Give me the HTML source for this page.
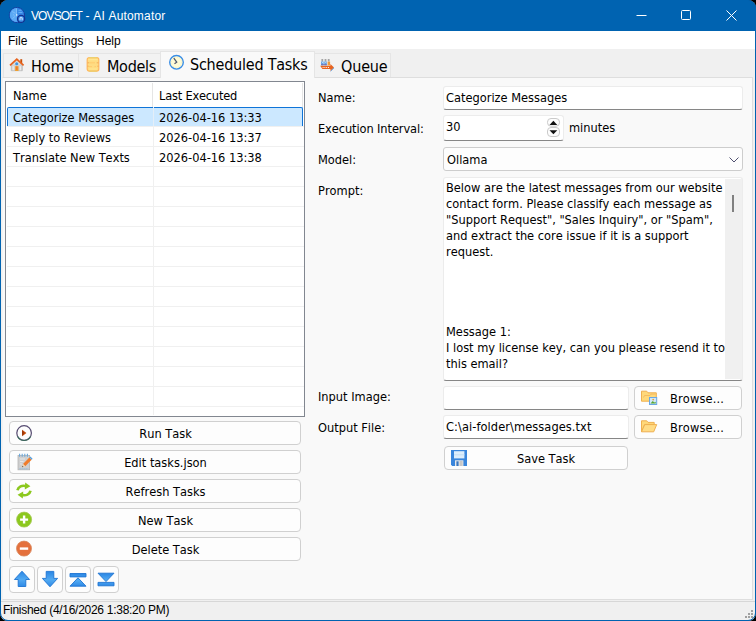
<!DOCTYPE html>
<html><head><meta charset="utf-8"><title>VOVSOFT - AI Automator</title>
<style>
*{box-sizing:border-box;margin:0;padding:0}
html,body{width:756px;height:621px;overflow:hidden;background:#fff}
body{font-family:"DejaVu Sans Condensed","DejaVu Sans","Liberation Sans",sans-serif;font-size:12.7px;color:#000;position:relative;font-kerning:none;-webkit-font-smoothing:auto}
.a{position:absolute}
svg.a{z-index:5}
#win{left:0;top:0;width:756px;height:621px;background:#f0f0f0;border:1px solid #0063b1;border-radius:8px;overflow:hidden}
#title{left:0;top:0;width:756px;height:31px;background:#0063b1}
.seg{font-family:"Liberation Sans",sans-serif;font-size:12px}
#ttext{left:31px;top:9px;color:#fff;white-space:nowrap;font-size:12px;letter-spacing:-0.1px}
#menu{left:1px;top:31px;width:754px;height:18px;background:#fff}
.mi{top:34px;white-space:nowrap}
.tab{top:53px;height:24px;background:#f2f2f2;border:1px solid #e5e5e5;border-bottom:none;font-size:16px;white-space:nowrap}
.tab span{position:absolute;top:3px}
.tab.act{top:51px;height:27px;background:#f9f9f9;z-index:2}
#page{left:2px;top:77px;width:751px;height:523px;background:#f9f9f9;border:1px solid #dedede;border-left-color:#f3f3f3}
#list{left:5px;top:81px;width:300px;height:336px;background:#fff;border:1px solid #828790}
.lt{white-space:nowrap}
.hl{background:#ededed;height:1px}
.vl{background:#ededed;width:1px}
.btn{background:#fdfdfd;border:1px solid #d0d0d0;border-radius:4px;text-align:center;white-space:nowrap}
.btn .t{position:absolute;left:21px;right:0;top:4px;text-align:center}
.edit{background:#fff;border:1px solid #ececec;border-bottom:1px solid #868686;border-radius:3px;white-space:nowrap}
.edit .t{position:absolute;left:2px;top:3px}
.lbl{white-space:nowrap}
#status{left:1px;top:601px;width:754px;height:19px;background:#f0f0f0;border-top:1px solid #d7d7d7}
</style></head><body>
<div id="win" class="a"></div>
<div id="title" class="a" style="border-radius:8px 8px 0 0"></div>
<div id="ttext" class="a seg"><span style="letter-spacing:-0.9px">VOVSOFT</span><span style="letter-spacing:0.18px"> - AI Automator</span></div>
<!-- window controls -->
<svg class="a" style="left:620px;top:0" width="136" height="31" viewBox="0 0 136 31">
<path d="M16.5 15.5h10" stroke="#fff" stroke-width="1" fill="none"/>
<rect x="61.5" y="10.5" width="9" height="9" rx="1" stroke="#fff" stroke-width="1" fill="none"/>
<path d="M106.5 10.5l10 10M116.5 10.5l-10 10" stroke="#fff" stroke-width="1" fill="none"/>
</svg>
<div id="menu" class="a"></div>
<div class="a seg mi" style="left:8px">File</div>
<div class="a seg mi" style="left:40px">Settings</div>
<div class="a seg mi" style="left:96px">Help</div>

<div id="page" class="a"></div>
<div class="a tab" style="left:3px;width:76px"><span style="left:27px">Home</span></div>
<div class="a tab" style="left:78px;width:83px"><span style="left:28px;letter-spacing:-0.3px">Models</span></div>
<div class="a tab act" style="left:160px;width:155px"><span style="left:29px;top:3px;letter-spacing:-0.22px">Scheduled Tasks</span></div>
<div class="a tab" style="left:314px;width:77px"><span style="left:26px;letter-spacing:-0.15px">Queue</span></div>

<div id="list" class="a"></div>
<div class="a lt" style="left:13px;top:88px">Name</div>
<div class="a lt" style="left:159px;top:88px;letter-spacing:-0.2px">Last Executed</div>
<div class="a vl" style="left:152px;top:83px;height:24px;background:#e5e5e5"></div>
<div class="a vl" style="left:302px;top:83px;height:24px;background:#e5e5e5"></div>
<div class="a vl" style="left:153px;top:107px;height:308px;background:#f0f0f0"></div>
<div class="a hl" style="left:7px;top:126px;width:297px;background:#f0f0f0"></div>
<div class="a hl" style="left:7px;top:146px;width:297px;background:#f0f0f0"></div>
<div class="a hl" style="left:7px;top:166px;width:297px;background:#f0f0f0"></div>
<div class="a hl" style="left:7px;top:186px;width:297px;background:#f0f0f0"></div>
<div class="a hl" style="left:7px;top:206px;width:297px;background:#f0f0f0"></div>
<div class="a hl" style="left:7px;top:226px;width:297px;background:#f0f0f0"></div>
<div class="a hl" style="left:7px;top:246px;width:297px;background:#f0f0f0"></div>
<div class="a hl" style="left:7px;top:266px;width:297px;background:#f0f0f0"></div>
<div class="a hl" style="left:7px;top:286px;width:297px;background:#f0f0f0"></div>
<div class="a hl" style="left:7px;top:306px;width:297px;background:#f0f0f0"></div>
<div class="a hl" style="left:7px;top:326px;width:297px;background:#f0f0f0"></div>
<div class="a hl" style="left:7px;top:346px;width:297px;background:#f0f0f0"></div>
<div class="a hl" style="left:7px;top:366px;width:297px;background:#f0f0f0"></div>
<div class="a hl" style="left:7px;top:386px;width:297px;background:#f0f0f0"></div>
<div class="a hl" style="left:7px;top:406px;width:297px;background:#f0f0f0"></div>
<div class="a" style="left:7px;top:107px;width:296px;height:19px;background:#cce8ff;border:1px solid #0f74d8;border-bottom:none;border-radius:2px 2px 0 0"></div>
<div class="a vl" style="left:153px;top:107px;height:19px;background:#e4eef8"></div>
<div class="a lt" style="left:13px;top:110px">Categorize Messages</div>
<div class="a lt" style="left:159px;top:110px">2026-04-16 13:33</div>
<div class="a lt" style="left:13px;top:130px">Reply to Reviews</div>
<div class="a lt" style="left:159px;top:130px">2026-04-16 13:37</div>
<div class="a lt" style="left:13px;top:150px">Translate New Texts</div>
<div class="a lt" style="left:159px;top:150px">2026-04-16 13:38</div>

<div class="a btn" style="left:9px;top:421px;width:292px;height:24px"><span class="t">Run Task</span></div>
<div class="a btn" style="left:9px;top:450px;width:292px;height:24px"><span class="t">Edit tasks.json</span></div>
<div class="a btn" style="left:9px;top:479px;width:292px;height:24px"><span class="t">Refresh Tasks</span></div>
<div class="a btn" style="left:9px;top:508px;width:292px;height:24px"><span class="t">New Task</span></div>
<div class="a btn" style="left:9px;top:537px;width:292px;height:24px"><span class="t">Delete Task</span></div>
<div class="a btn" style="left:9px;top:566px;width:26px;height:27px"></div>
<div class="a btn" style="left:37px;top:566px;width:26px;height:27px"></div>
<div class="a btn" style="left:65px;top:566px;width:26px;height:27px"></div>
<div class="a btn" style="left:93px;top:566px;width:26px;height:27px"></div>

<div class="a lbl" style="left:318px;top:90px">Name:</div>
<div class="a lbl" style="left:318px;top:121px;letter-spacing:-0.09px">Execution Interval:</div>
<div class="a lbl" style="left:318px;top:152px">Model:</div>
<div class="a lbl" style="left:318px;top:183px">Prompt:</div>
<div class="a lbl" style="left:318px;top:389px">Input Image:</div>
<div class="a lbl" style="left:318px;top:420px">Output File:</div>

<div class="a edit" style="left:443px;top:86px;width:300px;height:24px"><span class="t">Categorize Messages</span></div>
<div class="a edit" style="left:443px;top:115px;width:121px;height:26px"><span class="t" style="top:3px">30</span></div>
<div class="a lbl" style="left:569px;top:120px">minutes</div>
<div class="a edit" style="left:443px;top:147px;width:300px;height:24px;border:1px solid #cdcdcd;background:#fdfdfd"><span class="t" style="left:3px;top:4px">Ollama</span></div>
<div class="a edit" style="left:443px;top:177px;width:300px;height:204px;white-space:normal"></div>
<div class="a" style="left:725px;top:179px;width:17px;height:200px;background:#f0f0f0"></div>
<div class="a" style="left:732px;top:195px;width:2px;height:17px;background:#808080"></div>
<div class="a" style="left:446px;top:180px;width:285px;line-height:16px;white-space:pre">Below are the latest messages from our website
contact form. Please classify each message as
"Support Request", "Sales Inquiry", or "Spam",
and extract the core issue if it is a support
request.




Message 1:
I lost my license key, can you please resend it to
this email?</div>
<div class="a edit" style="left:443px;top:386px;width:186px;height:24px"></div>
<div class="a edit" style="left:443px;top:415px;width:186px;height:24px"><span class="t" style="letter-spacing:0.08px">C:\ai-folder\messages.txt</span></div>
<div class="a btn" style="left:634px;top:386px;width:108px;height:24px"><span class="t" style="left:18px;top:4px;letter-spacing:0.12px">Browse...</span></div>
<div class="a btn" style="left:634px;top:415px;width:108px;height:24px"><span class="t" style="left:18px;top:4px;letter-spacing:0.12px">Browse...</span></div>
<div class="a btn" style="left:444px;top:446px;width:184px;height:24px"><span class="t" style="left:20px;top:4px">Save Task</span></div>


<!-- app icon -->
<svg class="a" style="left:8px;top:6px" width="18" height="18" viewBox="0 0 18 18">
<circle cx="8.900" cy="9" r="7.500" fill="#3688e6" stroke="#17349a" stroke-width="1" stroke-dasharray="2.200 .600"/>
<path d="M8.900 1.900A7.100 7.100 0 0 0 8.900 16.100z" fill="#5ba9f5"/>
<path d="M8.500 2.500v8M4 5.500l3.500 1.800M4.300 12.600l3-2.400M5 8.500l1.500 1" stroke="#7cbcfa" stroke-width="1" fill="none"/>
<path d="M10.500 4.300h3M10.500 6.500h3.800" stroke="#62aef6" stroke-width="1" fill="none"/>
<rect x="8" y="8.200" width="1.400" height="1.400" fill="#d8ecff"/>
<circle cx="13.100" cy="12.900" r="3.500" fill="#3f93ea" stroke="#13308e" stroke-width="1.400"/>
<path d="M12 14.200v-2.500h2.200v2.500" stroke="#cfe6ff" stroke-width="1" fill="none"/>
</svg>
<!-- home icon -->
<svg class="a" style="left:8px;top:56px" width="18" height="17" viewBox="0 0 18 17">
<rect x="12.300" y="3.200" width="1.900" height="4.300" fill="#c8500a"/>
<path d="M3.300 8.800L8.800 4l5.500 4.800v5.900H3.300z" fill="#d2d2d2" stroke="#b8b8b8" stroke-width=".8"/>
<path d="M5.200 10.200v4M12.300 10.200v4" stroke="#ececec" stroke-width="1.300"/>
<path d="M5.500 8.500L8.800 5.600l3.300 2.900" stroke="#e6e6e6" stroke-width="1" fill="none"/>
<rect x="7.100" y="10.200" width="3.400" height="4.800" fill="#f0a030"/>
<rect x="8" y="10.500" width="1.600" height="3.400" fill="#f07828"/>
<circle cx="8.700" cy="7.800" r="1.500" fill="#3c96e6"/>
<path d="M2 9.300L8.800 3.100l6.800 6.200" stroke="#e8641e" stroke-width="1.700" fill="none" stroke-linejoin="miter"/>
</svg>
<!-- models icon -->
<svg class="a" style="left:86px;top:56px" width="14" height="17" viewBox="0 0 14 17">
<rect x="1.200" y="1.700" width="11.600" height="13.400" rx="2" fill="#ffdc82" stroke="#ffb85c" stroke-width="1.200"/>
<path d="M3.200 1.600h7.600M3.200 15.200h7.600" stroke="#ecd070" stroke-width="1.200"/>
<path d="M2.200 3.600h9.600" stroke="#ffe690" stroke-width="1.400"/>
<path d="M1.500 6.800h1.800M10.700 6.800h1.800M1.500 10.200h1.200M11.300 10.200h1.200" stroke="#f0a050" stroke-width="1" opacity=".8"/>
<path d="M3 10.600h3M8.500 10.600h1.500M4 6.800h5" stroke="#ffc466" stroke-width="1" opacity=".7"/>
<path d="M3 13h8" stroke="#ffe690" stroke-width="1.200"/>
</svg>
<!-- clock icon -->
<svg class="a" style="left:168px;top:54px" width="17" height="17" viewBox="0 0 17 17">
<circle cx="8.5" cy="8.3" r="6.8" fill="#fffbd6" stroke="#3a8ee6" stroke-width="1.4"/>
<circle cx="8.5" cy="8.3" r="5.2" fill="none" stroke="#f4ecc0" stroke-width="1" stroke-dasharray="1 1.7"/>
<path d="M5.8 4.2l2.9 4-2.2 1.6" stroke="#50586e" stroke-width="1.3" fill="none"/>
</svg>
<!-- queue icon -->
<svg class="a" style="left:319px;top:57px" width="17" height="16" viewBox="0 0 17 16">
<path d="M2.400 2h1.800v2.600H2.400zM5.600 2h1.800v2.600H5.600zM8.800 2h1.800v2.600H8.800z" fill="#a4a4a4"/>
<path d="M2.100 4.600h2.500v3.800H2.100zM5.300 4.600h2.500v3.800H5.300z" fill="#5a9ee4"/>
<path d="M8.600 4.600h2.500v3.800H8.600z" fill="#ee9a3a"/>
<path d="M3 5.600h1M6.200 5.600h1" stroke="#c4e0fa" stroke-width="1"/>
<path d="M2.100 7.600h5.700" stroke="#7a6aa8" stroke-width=".8"/>
<path d="M1.200 8.800h10.200V7l3.600 3.500-3.600 3.500v-2H3.400z" fill="#e8641e"/>
<path d="M3.600 10.500h7" stroke="#fff" stroke-width=".9" stroke-dasharray="1 .8"/>
<path d="M11.600 14.200l3.400-3.400" stroke="#3c8ce0" stroke-width=".8"/>
</svg>
<!-- run icon -->
<svg class="a" style="left:15px;top:424px" width="18" height="18" viewBox="0 0 18 18">
<circle cx="9.100" cy="9" r="7.300" fill="#fdfdfd" stroke="#554a70" stroke-width="1.200"/>
<path d="M2.6 12.500a7.300 7.300 0 0 0 13 0" stroke="#3c6a5c" stroke-width="1.200" fill="none"/>
<path d="M7.200 5.800l4.200 3.200-4.200 3.200z" fill="#c04a08"/>
<path d="M7.200 5.800l1.500 3.200-1.500 3.200z" fill="#8c2c00"/>
</svg>
<!-- edit icon -->
<svg class="a" style="left:17px;top:453px" width="16" height="18" viewBox="0 0 16 18">
<rect x="1" y="2.500" width="11.600" height="14.300" fill="#cfcfcf" stroke="#b4b4b4" stroke-width=".8"/>
<path d="M2.600 .8v3M5.200 .8v3M7.800 .8v3M10.400 .8v3" stroke="#6aa8dc" stroke-width="1.100"/>
<path d="M2.600 15.800h8.600" stroke="#78b4e0" stroke-width="1" stroke-dasharray="1 1"/>
<path d="M3 6h5M3 8.500h3.500M3 11h2" stroke="#e6e6e6" stroke-width="1"/>
<path d="M12.400 4.600l2.200 2.200-6.400 6.400-2.200-2.200z" fill="#f07c2a"/>
<path d="M12.400 4.600l1-1 2.200 2.200-1 1z" fill="#58a0dc"/>
<path d="M6 11l2.200 2.200-3.200 1z" fill="#f4d8b0"/>
<path d="M5 14.200l.5-1.500 1 1z" fill="#444"/>
</svg>
<!-- refresh icon -->
<svg class="a" style="left:15px;top:482px" width="18" height="17" viewBox="0 0 18 17">
<g id="ra"><path d="M2.500 8.200C3.200 4.800 7 2.800 11.400 4.200" stroke="#8cc81e" stroke-width="2.700" fill="none"/>
<path d="M10.200 .600l5.200 3.700-5.600 3.300z" fill="#8cc81e"/></g>
<use href="#ra" transform="rotate(180 9 8.500)"/>
</svg>
<!-- new icon -->
<svg class="a" style="left:15px;top:511px" width="18" height="18" viewBox="0 0 18 18">
<circle cx="9.100" cy="8.600" r="7.500" fill="#8cc81e" stroke="#a4c850" stroke-width=".8"/>
<path d="M9.100 4.600v8M5.100 8.600h8" stroke="#fff" stroke-width="2.400"/>
</svg>
<!-- delete icon -->
<svg class="a" style="left:15px;top:540px" width="18" height="18" viewBox="0 0 18 18">
<circle cx="9" cy="8.600" r="7.500" fill="#e4703c" stroke="#d8865a" stroke-width=".8"/>
<path d="M4.800 8.600h8.400" stroke="#fff" stroke-width="2.400"/>
</svg>
<!-- arrows -->
<svg class="a" style="left:9px;top:566px" width="110" height="26" viewBox="0 0 110 26">
<defs><linearGradient id="bg" x1="0" y1="0" x2="0" y2="1"><stop offset="0" stop-color="#2a86e4"/><stop offset=".55" stop-color="#52aaf2"/><stop offset="1" stop-color="#2f8ae6"/></linearGradient></defs>
<path d="M13 5.200l7.600 8.300h-3.800v7h-7.600v-7H5.400z" fill="url(#bg)" stroke="#1e74d2" stroke-width=".9"/>
<path d="M37.200 5.400h7.600v7h3.800L41 20.800l-7.600-8.400h3.800z" fill="url(#bg)" stroke="#1e74d2" stroke-width=".9"/>
<path d="M61 7.500h16v3.400H61zM69 11.800l8 8.400H61z" fill="url(#bg)" stroke="#1e74d2" stroke-width=".9"/>
<path d="M89 7.200h16l-8 8.400zM89 16.400h16v3.400H89z" fill="url(#bg)" stroke="#1e74d2" stroke-width=".9"/>
</svg>
<!-- browse 1 -->
<svg class="a" style="left:640px;top:389px" width="18" height="17" viewBox="0 0 18 17">
<path d="M1.500 2.200h5.200l1.300 1.600h8.300v8.400H1.500z" fill="#ffd97a" stroke="#efb050" stroke-width="1"/>
<path d="M3.500 8.500l1-2h5.500l1-1.400h4.500" stroke="#f4b860" stroke-width=".9" fill="none"/>
<rect x="9.500" y="8.500" width="7.200" height="7" fill="#cfe8fa" stroke="#6aa8e4" stroke-width="1"/>
<path d="M10.400 14.600l2.400-2.600 1.400 1.400 1.500-.600v1.800z" fill="#5aa832"/>
<circle cx="13.200" cy="10.600" r=".9" fill="#f0a030"/>
</svg>
<!-- browse 2 -->
<svg class="a" style="left:640px;top:419px" width="18" height="15" viewBox="0 0 18 15">
<path d="M1.500 1.800h5.200l1.300 1.600h6.200v2H4.700L1.500 12.800z" fill="#ffd97a" stroke="#efb050" stroke-width="1"/>
<path d="M1.500 12.800l3.200-7.200h12l-3 7.200z" fill="#ffdc86" stroke="#efb050" stroke-width="1"/>
</svg>
<!-- save icon -->
<svg class="a" style="left:451px;top:450px" width="16" height="16" viewBox="0 0 16 16">
<path d="M0 0h16v16H1.200L0 14.800z" fill="#3a86dc"/>
<rect x="3" y="1.200" width="10.400" height="7.200" fill="#ddeefc"/>
<path d="M3 4.800h10.400" stroke="#c4def6" stroke-width="1"/>
<rect x="4" y="10.300" width="8.400" height="5.700" fill="#e8e8e8"/>
<rect x="5.400" y="11.300" width="2.200" height="4.700" fill="#3a78c0"/>
<rect x="8.600" y="11" width="3" height="5" fill="#c8c8c8"/>
</svg>
<svg class="a" style="left:546px;top:117px" width="16" height="22" viewBox="0 0 16 22">
<rect x="1.500" y="1.500" width="12" height="7.700" rx="3.500" fill="#fdfdfd" stroke="#cacaca" stroke-width="1"/>
<rect x="1.500" y="10.500" width="12" height="9" rx="3.500" fill="#fdfdfd" stroke="#cacaca" stroke-width="1"/>
<path d="M3.500 8l3.900-4.200 3.900 4.200z" fill="#111"/>
<path d="M3.500 13.200l3.900 4 3.900-4z" fill="#111"/>
</svg>
<svg class="a" style="left:728px;top:155px" width="12" height="9" viewBox="0 0 12 9">
<path d="M1.500 2.500l4.500 4.500 4.500-4.500" stroke="#505070" stroke-width="1" fill="none"/>
</svg>
<div id="status" class="a"></div>
<div class="a" style="left:0;top:0;width:756px;height:621px;border:1px solid #0063b1;border-radius:8px;box-shadow:0 0 0 20px #000;z-index:20"></div>
<svg class="a" style="left:744px;top:609px" width="11" height="11" viewBox="0 0 11 11"><rect x="7" y="1" width="2" height="2" fill="#a0a0a0"/><rect x="4" y="4" width="2" height="2" fill="#a0a0a0"/><rect x="7" y="4" width="2" height="2" fill="#a0a0a0"/><rect x="1" y="7" width="2" height="2" fill="#a0a0a0"/><rect x="4" y="7" width="2" height="2" fill="#a0a0a0"/><rect x="7" y="7" width="2" height="2" fill="#a0a0a0"/></svg>
<div class="a seg" style="left:3px;top:603px;white-space:nowrap;letter-spacing:-0.28px">Finished (4/16/2026 1:38:20 PM)</div>
</body></html>
